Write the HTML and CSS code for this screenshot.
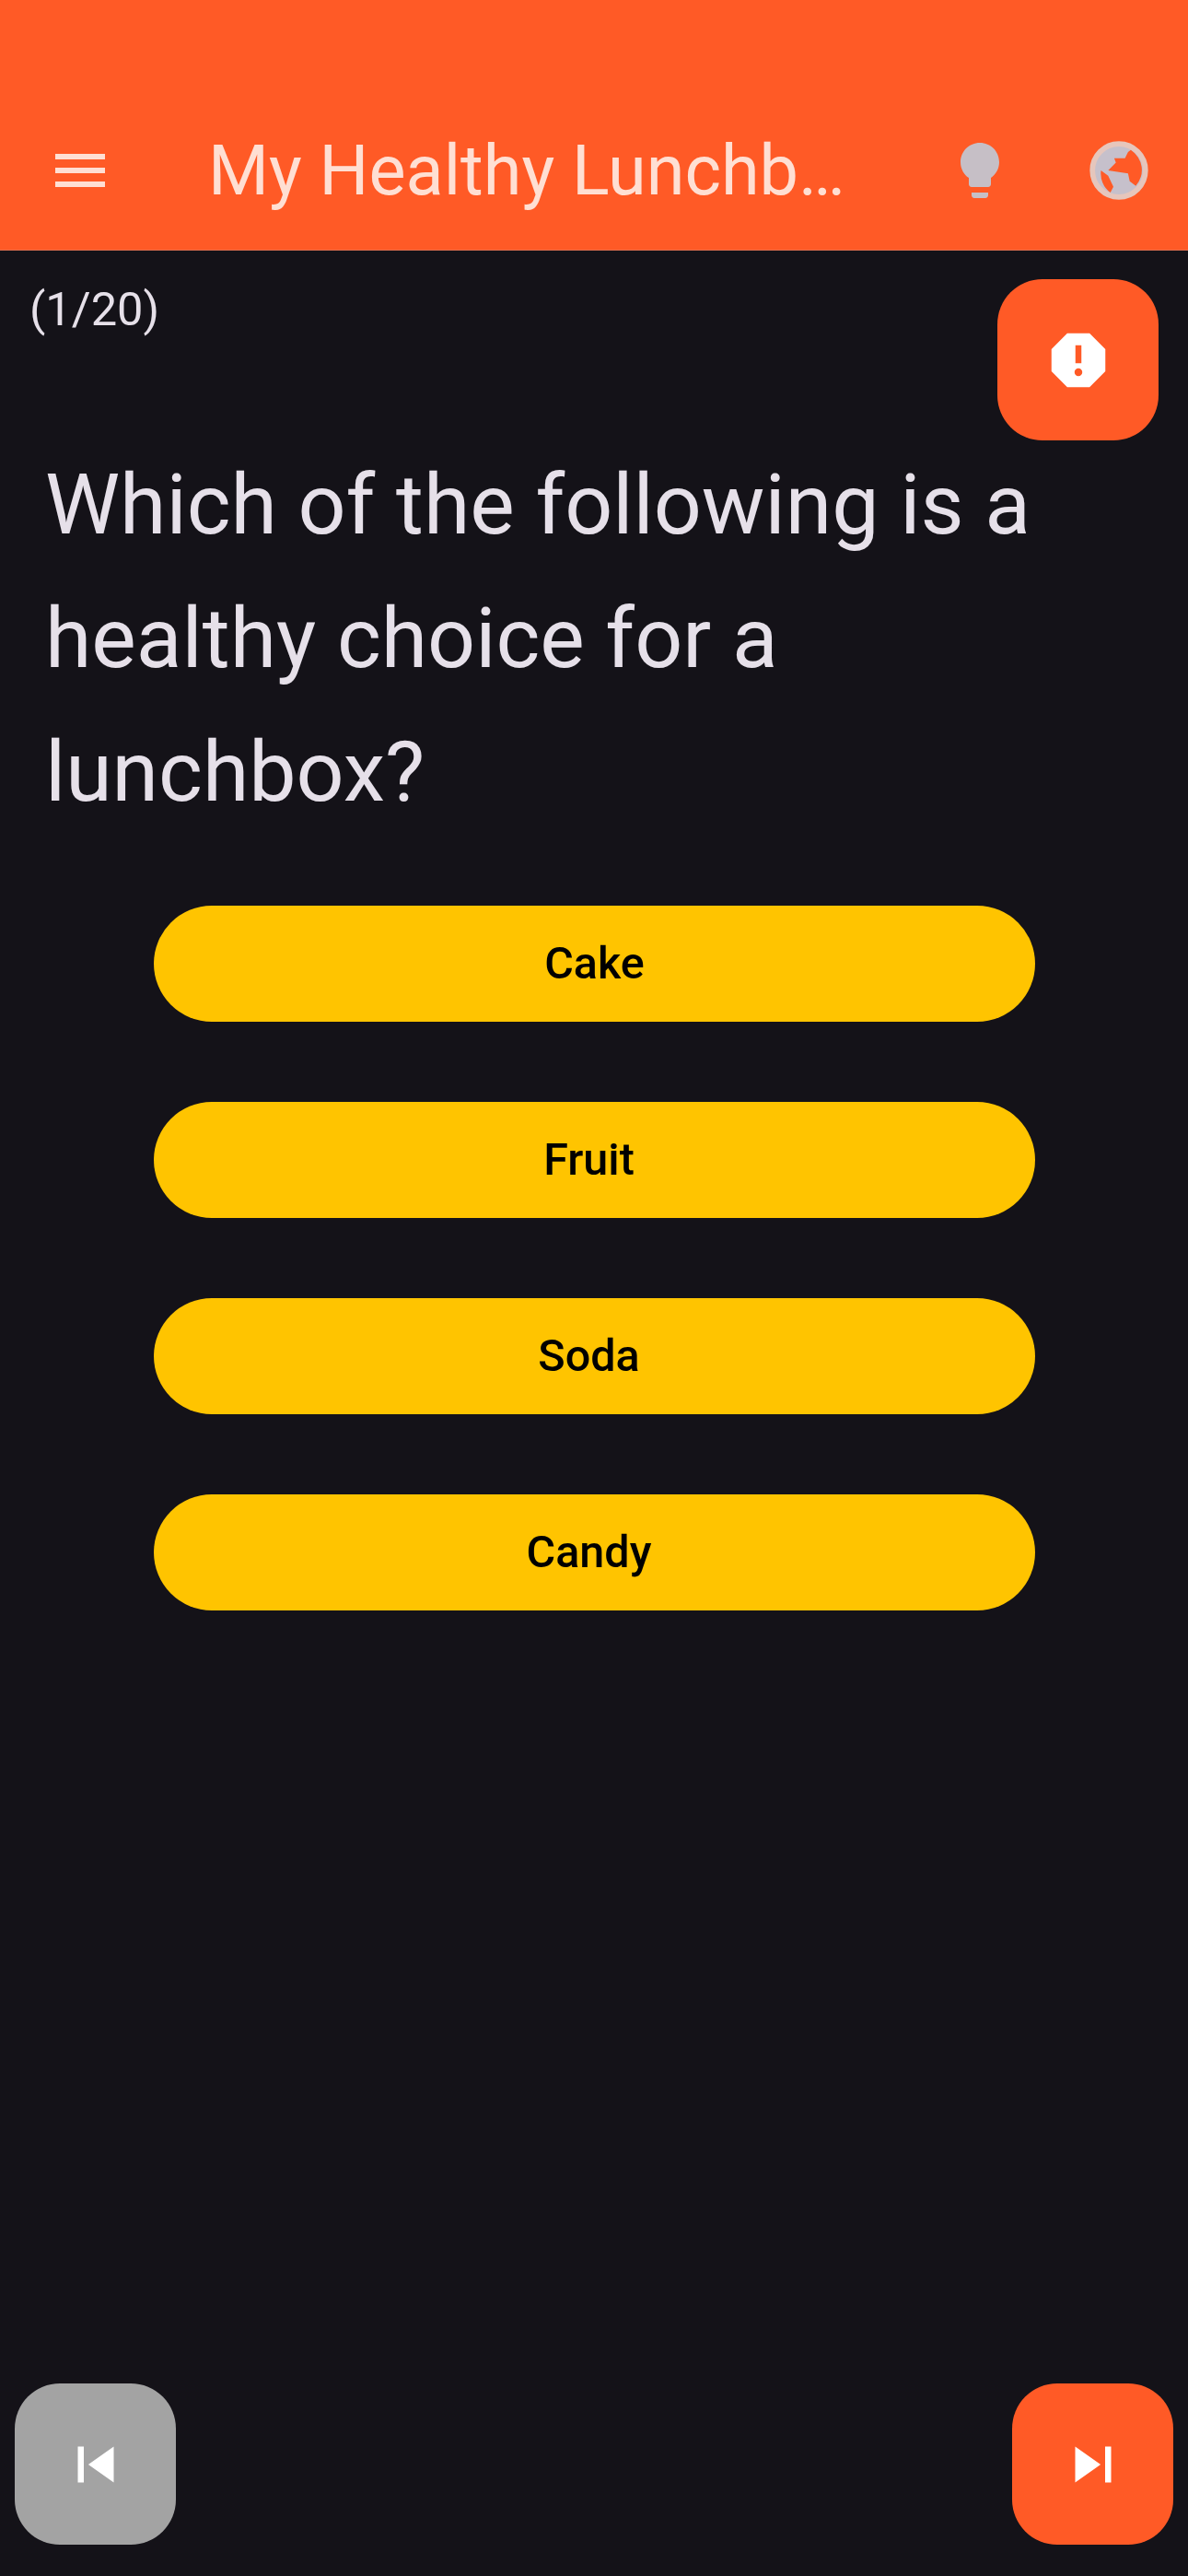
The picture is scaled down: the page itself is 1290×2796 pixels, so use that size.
FILE: index.html
```html
<!DOCTYPE html>
<html>
<head>
<meta charset="utf-8">
<title>My Healthy Lunchbox</title>
<link rel="stylesheet" href="styles.css">
</head>
<body>

<header class="appbar">
  <svg class="icon menu-icon" viewBox="0 0 24 24"><path d="M3 18h18v-2H3v2zm0-5h18v-2H3v2zm0-7v2h18V6H3z"/></svg>
  <div class="appbar-title">My Healthy Lunchb…</div>
  <svg class="icon bulb-icon" viewBox="0 0 24 24"><path d="M9 21c0 .5.4 1 1 1h4c.6 0 1-.5 1-1v-1H9v1zm3-19C8.1 2 5 5.1 5 9c0 2.4 1.2 4.5 3 5.7V17c0 .5.4 1 1 1h6c.6 0 1-.5 1-1v-2.3c1.8-1.3 3-3.4 3-5.7 0-3.9-3.1-7-7-7z"/></svg>
  <svg class="icon globe-icon" viewBox="0 0 24 24">
    <path class="globe-land" fill-rule="evenodd" d="M12 2.5a9.5 9.5 0 1 0 0 19a9.5 9.5 0 0 0 0-19zM15.3 5.3L16.3 4.6A8.6 8.6 0 0 1 18.1 17.6L15.9 15.9L15.3 13.1L8.1 12L10.9 9.2L10.3 7.6H14.2zM5.5 12L8.1 13.9L10 17.9L8.9 20A8.6 8.6 0 0 1 5.5 12z"/>
    <circle class="globe-ring" cx="12" cy="12" r="9.6"/>
  </svg>
</header>

<main class="content">
  <div class="top-row">
    <span class="counter">(1/20)</span>
    <button class="fab fab-orange">
      <svg class="fab-icon" viewBox="0 0 24 24"><path d="M15.73 3H8.27L3 8.27v7.46L8.27 21h7.46L21 15.73V8.27L15.73 3zM12 17.3c-.72 0-1.3-.58-1.3-1.3 0-.72.58-1.3 1.3-1.3.72 0 1.3.58 1.3 1.3 0 .72-.58 1.3-1.3 1.3zm1-4.3h-2V7h2v6z"/></svg>
    </button>
  </div>

  <h1 class="question">Which of the following is a healthy choice for a lunchbox?</h1>

  <div class="answers">
    <button class="answer">Cake</button>
    <button class="answer">Fruit</button>
    <button class="answer">Soda</button>
    <button class="answer">Candy</button>
  </div>
</main>

<footer class="bottom-nav">
  <button class="fab fab-grey">
    <svg class="fab-icon" viewBox="0 0 24 24"><path d="M6 6h2v12H6zm3.5 6l8.5 6V6z"/></svg>
  </button>
  <button class="fab fab-orange">
    <svg class="fab-icon" viewBox="0 0 24 24"><path d="M6 18l8.5-6L6 6v12zM16 6v12h2V6h-2z"/></svg>
  </button>
</footer>

</body>
</html>
```

FILE: styles.css
```css
* { box-sizing: border-box; }

body {
  margin: 0;
  height: 2796px;
  display: flex;
  flex-direction: column;
  background-color: #141218;
  font-family: Roboto, sans-serif;
  color: #e6e0e9;
}

button {
  border: none;
  padding: 0;
  font-family: inherit;
}

/* app bar */
.appbar {
  height: 272px;
  padding: 98px 0 0 51px;
  display: flex;
  align-items: center;
  background-color: #ff5a26;
  border-bottom: 1px solid #e0704f;
  color: #ffdfd3;
}

.icon {
  width: 72px;
  height: 72px;
  flex: none;
  fill: currentColor;
}

.appbar-title {
  width: 690px;
  margin-left: 103px;
  font-size: 75.6px;
  white-space: nowrap;
}

.bulb-icon {
  margin-left: 112px;
  color: #c6bfc6;
}

.globe-icon {
  margin-left: 79px;
}

.globe-land { fill: #c6c0cb; }

.globe-ring {
  fill: none;
  stroke: #e6c6bc;
  stroke-width: 1.9;
}

/* question area */
.content {
  flex: 1;
  padding: 31px 32px 0 32px;
}

.top-row {
  display: flex;
  justify-content: space-between;
  align-items: flex-start;
}

.counter {
  font-size: 50.6px;
  line-height: 66px;
}

.question {
  margin: -3px 0 0 17px;
  font-size: 91.4px;
  font-weight: 400;
  line-height: 145px;
  width: 1140px;
}

.answers {
  margin: 73px 0 0 135px;
  display: flex;
  flex-direction: column;
  gap: 87px;
  width: 957px;
}

.answer {
  height: 126px;
  padding: 0 12px 2px 0;
  border-radius: 63px;
  background-color: #ffc400;
  color: #000;
  font-size: 48.5px;
  font-weight: 500;
}

.answer:first-child { padding-right: 0; }

/* square buttons */
.fab {
  width: 175px;
  height: 175px;
  border-radius: 49px;
  display: flex;
  align-items: center;
  justify-content: center;
}

.fab-orange { background-color: #ff5a26; }
.fab-grey { background-color: #a3a3a3; }

.fab-icon {
  width: 78px;
  height: 78px;
  fill: #fff;
}

.bottom-nav {
  display: flex;
  justify-content: space-between;
  padding: 0 16px 34px 16px;
}
```
